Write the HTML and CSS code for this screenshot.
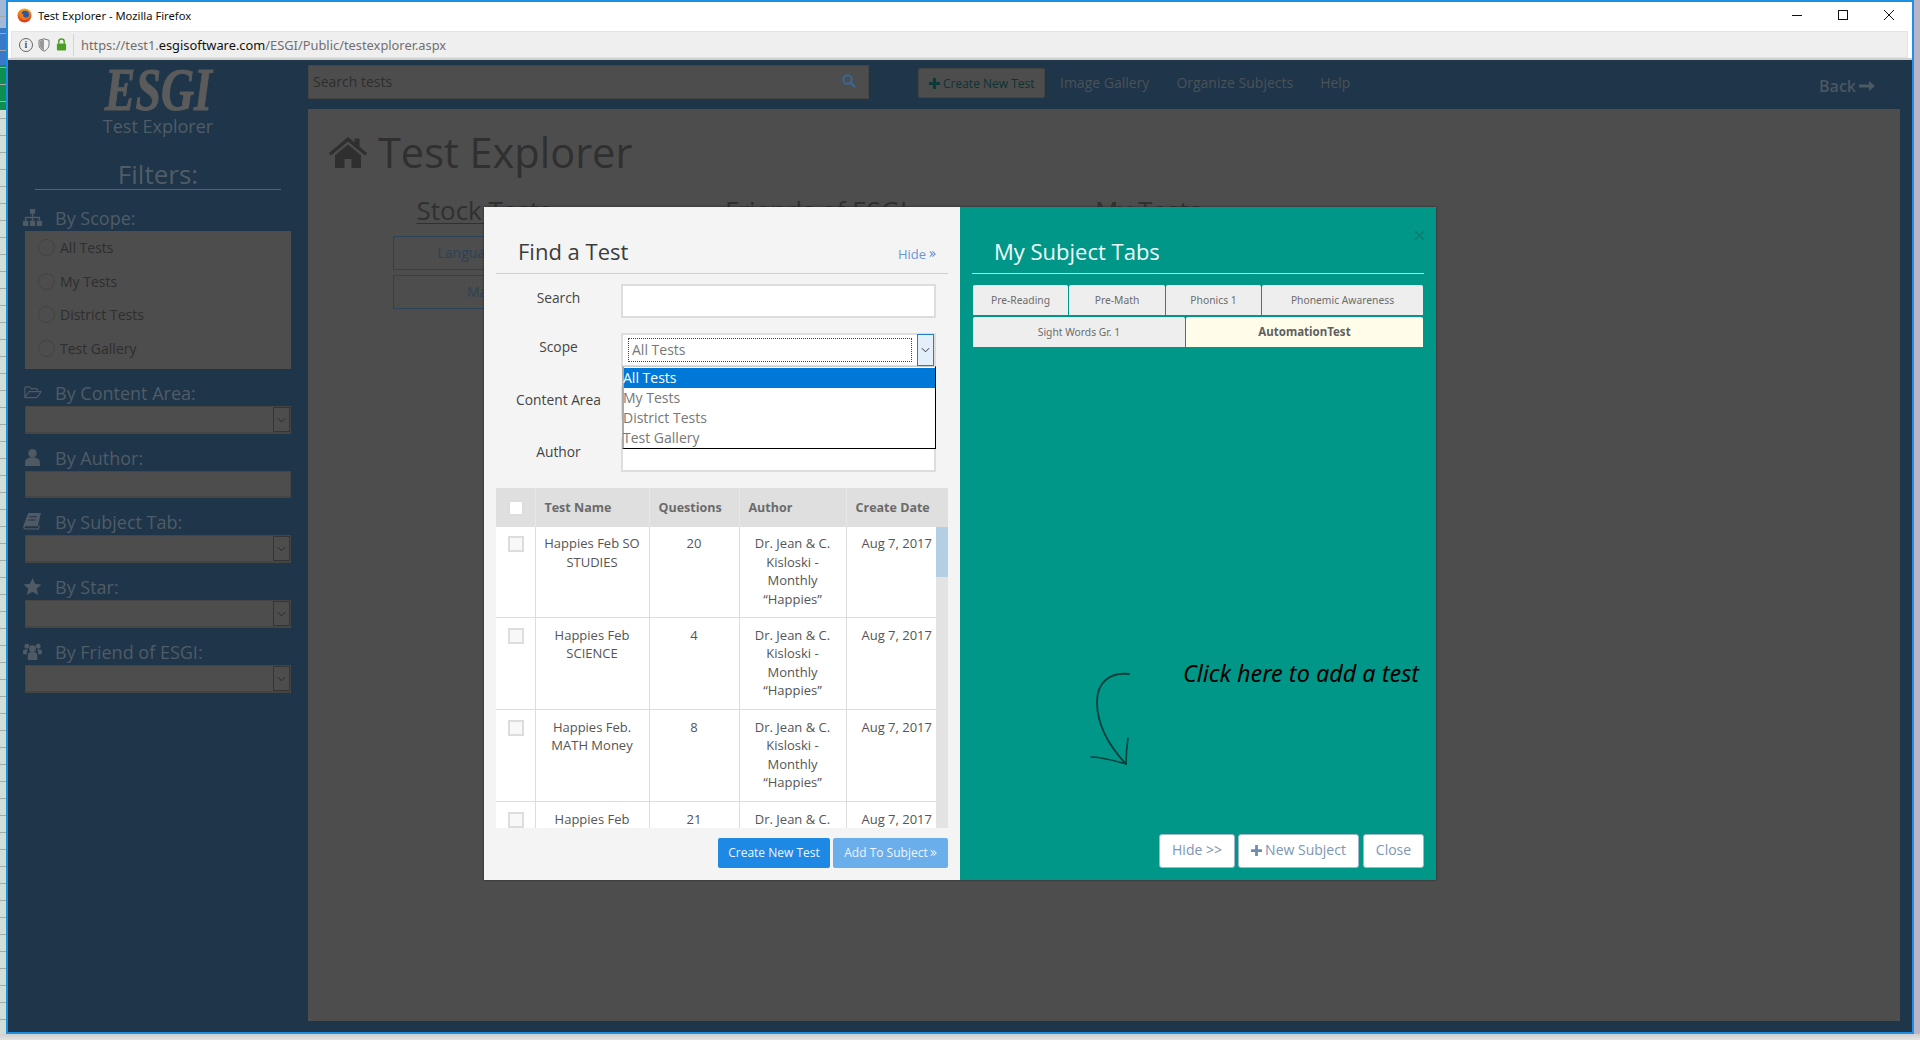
FILE: index.html
```html
<!DOCTYPE html>
<html lang="en">
<head>
<meta charset="utf-8">
<title>Test Explorer - Mozilla Firefox</title>
<link rel="stylesheet" href="styles.css">
</head>
<body>
<div class="desktop">
  <div class="strip-left"></div>
  <div class="window">
    <div class="titlebar">
      <svg class="ff" viewBox="0 0 16 16" width="15" height="15"><defs><linearGradient id="ffg" x1="0" y1="0" x2="0" y2="1"><stop offset="0" stop-color="#f7a31c"/><stop offset="1" stop-color="#d6371f"/></linearGradient></defs><circle cx="8" cy="8" r="7.5" fill="url(#ffg)"/><circle cx="8.6" cy="7.2" r="4.2" fill="#2b5aa0"/><path d="M3 3.5C2 7 3.5 12.5 8.5 12.5c2.8 0 4.6-2 4.8-4.4-1 1.7-2.6 2.5-4.3 2.2C6.800 10 5.800 8 7 6.500 5.500 6.500 4.500 5.500 5 4 4 4 3.500 4 3 3.500z" fill="#ef7a1f"/></svg>
      <span class="title-text">Test Explorer - Mozilla Firefox</span>
      <div class="win-controls">
        <svg viewBox="0 0 12 12" width="12" height="12"><path d="M1 6.500h10" stroke="#111" stroke-width="1" fill="none"/></svg>
        <svg viewBox="0 0 12 12" width="12" height="12"><rect x="1.500" y="1.500" width="9" height="9" stroke="#111" fill="none"/></svg>
        <svg viewBox="0 0 12 12" width="12" height="12"><path d="M1 1l10 10M11 1L1 11" stroke="#111" fill="none"/></svg>
      </div>
    </div>
    <div class="addressbar">
      <div class="address-box">
        <span class="info-icon">i</span>
        <svg class="shield" viewBox="0 0 12 14" width="12" height="14"><path d="M6 .8l5 1.500v4.500c0 3-2.300 5.200-5 6.400C3.300 12 1 9.800 1 6.800V2.300z" fill="#f5f5f5" stroke="#777"/><path d="M6 1.500v11c-2.300-1-4.300-3-4.300-5.700V2.800z" fill="#999"/></svg>
        <svg class="lock" viewBox="0 0 12 14" width="11" height="13"><path d="M3 6V4a3 3 0 016 0v2" stroke="#4c9f25" stroke-width="1.600" fill="none"/><rect x="1" y="6" width="10" height="7.500" rx="1" fill="#4c9f25"/></svg>
        <span class="url"><span class="url-dim">https://test1.</span><span class="url-host">esgisoftware.com</span><span class="url-dim">/ESGI/Public/testexplorer.aspx</span></span>
      </div>
    </div>
    <div class="page">
      <aside class="sidebar">
        <div class="logo"><span class="logo-word">ESGI</span></div>
        <div class="logo-sub">Test Explorer</div>
        <div class="filters-title">Filters:</div>
        <div class="heading">
          <svg class="heading-icon" viewBox="0 0 18 16"><path d="M6.500 0h5v4.500h-5zM0 11h5v5H0zM6.500 11h5v5h-5zM13 11h5v5h-5z" fill="#4f5a64"/><path d="M9 4v7M2.500 11V8h13v3" stroke="#4f5a64" stroke-width="1.400" fill="none"/></svg>
          <span>By Scope:</span>
        </div>
        <div class="scope-panel">
          <label class="radio-row"><span class="radio"></span>All Tests</label>
          <label class="radio-row"><span class="radio"></span>My Tests</label>
          <label class="radio-row"><span class="radio"></span>District Tests</label>
          <label class="radio-row"><span class="radio"></span>Test Gallery</label>
        </div>
        <div class="heading spaced">
          <svg class="heading-icon" viewBox="0 0 20 14"><path d="M2 12.500V2.200c0-.6.400-1 1-1h4l1.500 1.800H14c.6 0 1 .4 1 1v2M2 12.500h12.500L19 6.200H6.200z" fill="none" stroke="#4f5a64" stroke-width="1.300" stroke-linejoin="round"/></svg>
          <span>By Content Area:</span>
        </div>
        <div class="side-select"><span class="side-arrow"><svg viewBox="0 0 10 6" width="9" height="6"><path d="M1 1l4 4 4-4" stroke="#222" fill="none"/></svg></span></div>
        <div class="heading spaced">
          <svg class="heading-icon" viewBox="0 0 18 16"><circle cx="9" cy="4" r="4" fill="#4f5a64"/><path d="M2 16v-3.500C2 9.500 4.500 8 9 8s7 1.500 7 4.500V16z" fill="#4f5a64"/></svg>
          <span>By Author:</span>
        </div>
        <div class="side-input"></div>
        <div class="heading spaced">
          <svg class="heading-icon" viewBox="0 0 18 16"><path d="M5 0h12l-3 12.500H2.500c-1.300 0-1.300 2 0 2H14l1-3 1 .5-1 3.500H2C0 15.500 0 13 .5 11.500z" fill="#4f5a64"/><path d="M6 3.500h7M5 6.500h7" stroke="#1f3549" fill="none"/></svg>
          <span>By Subject Tab:</span>
        </div>
        <div class="side-select"><span class="side-arrow"><svg viewBox="0 0 10 6" width="9" height="6"><path d="M1 1l4 4 4-4" stroke="#222" fill="none"/></svg></span></div>
        <div class="heading spaced">
          <svg class="heading-icon" viewBox="0 0 18 16"><path d="M9 0l2.500 5.500 6 .6-4.500 4 1.300 5.900L9 13l-5.300 3L5 10.100.5 6.100l6-.6z" fill="#4f5a64"/></svg>
          <span>By Star:</span>
        </div>
        <div class="side-select"><span class="side-arrow"><svg viewBox="0 0 10 6" width="9" height="6"><path d="M1 1l4 4 4-4" stroke="#222" fill="none"/></svg></span></div>
        <div class="heading spaced">
          <svg class="heading-icon" viewBox="0 0 20 18"><circle cx="4" cy="3.500" r="2.600" fill="#4f5a64"/><circle cx="16" cy="3.500" r="2.600" fill="#4f5a64"/><circle cx="10" cy="6" r="3.600" fill="#4f5a64"/><path d="M0 12V9c0-2 1.500-2.500 4-2.500l1 1.500c-1 1-1 2.500-1 4zM20 12V9c0-2-1.500-2.500-4-2.500L15 8c1 1 1 2.500 1 4zM5 18v-5c0-2.500 1.500-3.500 5-3.500s5 1 5 3.500v5z" fill="#4f5a64"/></svg>
          <span>By Friend of ESGI:</span>
        </div>
        <div class="side-select"><span class="side-arrow"><svg viewBox="0 0 10 6" width="9" height="6"><path d="M1 1l4 4 4-4" stroke="#222" fill="none"/></svg></span></div>
      </aside>
      <main class="main">
        <div class="topbar">
          <div class="top-search">
            <span class="top-search-text">Search tests</span>
            <svg viewBox="0 0 14 14" width="14" height="14"><circle cx="5.500" cy="5.500" r="4.200" stroke="#33689a" stroke-width="2" fill="none"/><path d="M8.800 8.800L13 13" stroke="#33689a" stroke-width="2.400"/></svg>
          </div>
          <div class="top-create"><svg viewBox="0 0 12 12" width="11" height="11"><path d="M6 0v12M0 6h12" stroke="#0c3a38" stroke-width="3.400"/></svg><span>Create New Test</span></div>
          <nav class="top-nav"><span>Image Gallery</span><span>Organize Subjects</span><span>Help</span></nav>
          <div class="back">Back <svg viewBox="0 0 16 10" width="16" height="10"><path d="M0 3.500h10V0l6 5-6 5V6.500H0z" fill="#4d5963"/></svg></div>
        </div>
        <div class="content">
          <h1 class="page-title"><svg viewBox="0 0 38 31" width="38" height="31"><path d="M19 0l6.500 5.500V1.500h5v8.200L38 16l-2 2.500L19 4.500 2 18.500 0 16z" fill="#2f2f2f"/><path d="M19 7.500l13 10.800V31h-9.500v-9h-7v9H6V18.300z" fill="#2f2f2f"/></svg>Test Explorer</h1>
          <div class="columns">
            <section>
              <h2>Stock Tests</h2>
              <div class="stock-btn">Language Arts</div>
              <div class="stock-btn">Math</div>
            </section>
            <section><h2>Friends of ESGI</h2></section>
            <section><h2>My Tests</h2></section>
          </div>
        </div>
      </main>
    </div>
  </div>
  <div class="modal">
    <div class="panel-left">
      <div class="panel-head">
        <span class="panel-title">Find a Test</span>
        <span class="hide-link">Hide<svg class="chev" viewBox="0 0 8 8" width="7" height="8"><path d="M1 1l3 3-3 3M4 1l3 3-3 3" stroke="currentColor" stroke-width="1.300" fill="none"/></svg></span>
      </div>
      <div class="form-row first"><span class="form-label">Search</span><div class="field"></div></div>
      <div class="form-row scope"><span class="form-label">Scope</span>
        <div class="field select-field">
          <div class="select-focus">All Tests</div>
          <div class="select-btn"><svg viewBox="0 0 10 6" width="9" height="6"><path d="M1 1l4 4 4-4" stroke="#222" fill="none"/></svg></div>
          <ul class="dropdown">
            <li class="selected">All Tests</li>
            <li>My Tests</li>
            <li>District Tests</li>
            <li>Test Gallery</li>
          </ul>
        </div>
      </div>
      <div class="form-row content-row"><span class="form-label">Content Area</span><div class="field"></div></div>
      <div class="form-row author-row"><span class="form-label">Author</span><div class="field"></div></div>
      <div class="table-box">
        <table class="grid head">
          <colgroup><col class="c1"><col class="c2"><col class="c3"><col class="c4"><col class="c5h"></colgroup>
          <tr><th class="check"><span class="box white"></span></th><th>Test Name</th><th>Questions</th><th>Author</th><th>Create Date</th></tr>
        </table>
        <div class="table-scroll">
          <table class="grid body">
            <colgroup><col class="c1"><col class="c2"><col class="c3"><col class="c4"><col class="c5"></colgroup>
            <tr class="row-first"><td class="check"><span class="box"></span></td><td>Happies Feb SO STUDIES</td><td>20</td><td>Dr. Jean &amp; C. Kisloski - Monthly “Happies”</td><td class="date">Aug 7, 2017</td></tr>
            <tr><td class="check"><span class="box"></span></td><td>Happies Feb SCIENCE</td><td>4</td><td>Dr. Jean &amp; C. Kisloski - Monthly “Happies”</td><td class="date">Aug 7, 2017</td></tr>
            <tr><td class="check"><span class="box"></span></td><td>Happies Feb. MATH Money</td><td>8</td><td>Dr. Jean &amp; C. Kisloski - Monthly “Happies”</td><td class="date">Aug 7, 2017</td></tr>
            <tr><td class="check"><span class="box"></span></td><td>Happies Feb</td><td>21</td><td>Dr. Jean &amp; C. Kisloski - Monthly “Happies”</td><td class="date">Aug 7, 2017</td></tr>
          </table>
          <div class="scrollbar"><div class="thumb"></div></div>
        </div>
      </div>
      <div class="left-actions">
        <span class="action primary">Create New Test</span>
        <span class="action light">Add To Subject<svg class="chev" viewBox="0 0 8 8" width="7" height="8"><path d="M1 1l3 3-3 3M4 1l3 3-3 3" stroke="currentColor" stroke-width="1.200" fill="none"/></svg></span>
      </div>
    </div>
    <div class="panel-right">
      <svg class="close-x" viewBox="0 0 12 12" width="11" height="11"><path d="M1 1l10 10M11 1L1 11" stroke="#0b7d73" stroke-width="1.500" fill="none"/></svg>
      <div class="panel-head light-rule">
        <span class="panel-title white">My Subject Tabs</span>
      </div>
      <div class="tabs row-a">
        <span class="tab">Pre-Reading</span><span class="tab">Pre-Math</span><span class="tab">Phonics 1</span><span class="tab">Phonemic Awareness</span>
      </div>
      <div class="tabs row-b">
        <span class="tab">Sight Words Gr. 1</span><span class="tab active">AutomationTest</span>
      </div>
      <div class="hint">
        <svg class="hint-arrow" viewBox="0 0 46 100" width="46" height="100"><path d="M41 4C22 2 9 12 9 32c0 24 14 46 29 62" stroke="#063f3c" stroke-width="1.800" fill="none" stroke-linecap="round"/><path d="M3 87c12 0 24 4 35 7 0-10 1-19 2-26" stroke="#063f3c" stroke-width="1.600" fill="none" stroke-linecap="round"/></svg>
        <span class="hint-text">Click here to add a test</span>
      </div>
      <div class="right-actions">
        <span class="ghost hide-btn">Hide &gt;&gt;</span>
        <span class="ghost new-btn"><svg viewBox="0 0 12 12" width="11" height="11"><path d="M6 0v12M0 6h12" stroke="#6f8db0" stroke-width="3"/></svg>New Subject</span>
        <span class="ghost close-btn">Close</span>
      </div>
    </div>
  </div>
</div>
</body>
</html>
```
FILE: styles.css
```css
* { box-sizing: border-box; }
html, body { margin: 0; padding: 0; }
body { width: 1920px; height: 1040px; overflow: hidden; font-family: "Open Sans", "Noto Sans", sans-serif; }

.desktop {
  position: relative;
  width: 1920px;
  height: 1040px;
  display: flex;
  background: linear-gradient(#b9b4c8 0, #b9b4c8 1034px, #cfcfcf 1034px, #e4e4e4 1040px);
}
.strip-left {
  width: 6px;
  height: 1034px;
  background:
    repeating-linear-gradient(transparent 0 16px, #a5aaa8 16px 17px),
    linear-gradient(#a3b7d6 0 28px, #3a78c8 28px 65px, #0c8f50 65px 110px, #d2dfd9 110px);
}
.window {
  width: 1908px;
  height: 1034px;
  border: 2px solid #1c8fe3;
  display: flex;
  flex-direction: column;
  background: #fff;
}

/* Browser chrome */
.titlebar { height: 28px; display: flex; align-items: center; padding: 0 17px 2px 9px; }
.ff { margin-right: 6px; }
.title-text { font-family: "Noto Sans", sans-serif; font-size: 11.200px; color: #111; }
.win-controls { margin-left: auto; display: flex; gap: 34px; }
.addressbar { height: 30px; padding: 1px 4px 2px 3px; border-bottom: 2px solid #d0d0d0; }
.address-box { height: 27px; background: #efefef; border: 1px solid #e4e4e4; display: flex; align-items: center; padding-left: 7px; }
.info-icon { width: 14px; height: 14px; border: 1.500px solid #666; border-radius: 50%; font: bold 10px/11px "Liberation Serif", serif; color: #555; text-align: center; margin-right: 5px; }
.shield { margin-right: 6px; }
.lock { margin-right: 6px; }
.url { font-family: "Noto Sans", sans-serif; font-size: 12.850px; padding-left: 7px; border-left: 1px solid #d4d4d4; line-height: 22px; }
.url-dim { color: #6f6f6f; }
.url-host { color: #111; }

/* Page */
.page { flex: 1; display: flex; background: #1f3549; min-height: 0; }
.sidebar { width: 300px; padding: 0 17px; color: #505c67; }
.logo { text-align: center; height: 54px; padding-top: 4px; }
.logo-word { display: inline-block; font: italic bold 62px/50px "Liberation Serif", serif; color: #5b5b5b; -webkit-text-stroke: 1px #5b5b5b; transform: scaleX(.74); }
.logo-sub { font-size: 18px; line-height: 24px; text-align: center; }
.filters-title { font-size: 26px; line-height: 34px; text-align: center; margin: 19px 10px 0; border-bottom: 1px solid #56626c; height: 33px; }
.heading { display: flex; align-items: center; height: 26px; font-size: 18px; line-height: 24px; padding-bottom: 1px; margin-top: 15px; margin-left: -2px; }
.heading.spaced { margin-top: 11px; }
.heading-icon { width: 19px; height: 17px; margin-right: 13px; flex: none; }
.scope-panel { height: 138px; background: #4d4d4d; display: grid; grid-template-rows: repeat(4, 1fr); padding: 0 0 4px 13px; }
.radio-row { display: flex; align-items: center; font-size: 14px; color: #2e2e2e; }
.radio { width: 17px; height: 17px; border: 1px solid #424242; border-radius: 50%; margin-right: 5px; }
.side-select, .side-input { height: 28px; background: #4d4d4d; border: 1px solid #454545; border-width: 1px 1px 2px 1px; display: flex; justify-content: flex-end; }
.side-input { height: 27px; }
.side-arrow { width: 17px; border: 1px solid #353535; display: flex; align-items: center; justify-content: center; }

.main { flex: 1; display: flex; flex-direction: column; padding-right: 12px; padding-bottom: 11px; min-width: 0; }
.topbar { height: 49px; display: flex; align-items: flex-start; padding-top: 5px; color: #4f5a64; }
.top-search { width: 561px; height: 34px; background: #4d4d4d; border: 1px solid #454545; display: flex; align-items: center; justify-content: space-between; padding: 0 12px 2px 4px; font-size: 14px; color: #2e2e2e; }
.top-create { margin: 3px 0 0 49px; width: 127px; height: 30px; background: #4d4d4d; border: 1px solid #444; border-radius: 2px; display: flex; align-items: center; gap: 3px; padding-left: 10px; font-size: 12px; color: #0b3232; white-space: nowrap; }
.top-nav { display: flex; gap: 27px; margin: 5px 0 0 15px; font-size: 14px; line-height: 26px; color: #4b5258; }
.back { margin: 9px 25px 0 auto; font-size: 16px; line-height: 24px; font-weight: 600; display: flex; align-items: center; gap: 3px; color: #4b5761; }
.content { flex: 1; background: #4d4d4d; padding: 13px 0 0 21px; color: #303030; }
.page-title { display: flex; align-items: center; gap: 11px; height: 60px; margin: 0; font-size: 41.500px; font-weight: 400; }
.columns { display: grid; grid-template-columns: repeat(3, 182px); column-gap: 150px; margin: 9px 0 0 64px; }
.columns h2 { margin: 0; font-size: 26px; line-height: 38px; font-weight: 400; text-align: center; text-decoration: underline; text-underline-offset: 3px; text-decoration-thickness: 1px; white-space: nowrap; }
.stock-btn { height: 34px; margin-top: 5px; border: 1px solid #2b4359; text-align: center; font-size: 14px; line-height: 32px; color: #2b4156; }
h2 + .stock-btn { margin-top: 7px; }

/* Modal */
.modal { position: absolute; left: 484px; top: 207px; width: 952px; height: 673px; display: flex; box-shadow: 0 0 2px #222; }
.panel-left, .panel-right { width: 476px; padding: 0 12px; display: flex; flex-direction: column; position: relative; }
.panel-left { background: #f4f4f4; }
.panel-right { background: #009688; }
.panel-head { height: 67px; flex: none; border-bottom: 1px solid #cfcfcf; display: flex; align-items: flex-end; justify-content: space-between; padding: 0 12px 6px 22px; }
.panel-title { font-size: 22px; line-height: 32px; color: #3c3c3c; }
.panel-title.white { color: #f2fbfa; }
.light-rule { border-bottom-color: #b6e0db; padding-left: 22px; }
.hide-link { font-size: 13px; line-height: 20px; color: #6c95d6; padding-bottom: 3px; display: inline-flex; align-items: center; gap: 3px; }
.chev { flex: none; }

.form-row { display: grid; grid-template-columns: 125px 315px; height: 34px; }
.form-row.first { margin-top: 10px; }
.form-row.scope { margin-top: 15px; }
.form-row.content-row { margin-top: 19px; }
.form-row.author-row { margin-top: 18px; }
.form-label { text-align: center; font-size: 13.800px; line-height: 28px; color: #444; }
.field { height: 34px; background: #fff; border: 1px solid #ddd; box-shadow: inset 0 0 0 1px #ddd; position: relative; }
.select-field { display: flex; align-items: center; padding: 1px 1px 1px 6px; justify-content: space-between; }
.select-focus { width: 284px; height: 24px; border: 1px dotted #444; font-size: 14px; line-height: 22px; padding-left: 3px; color: #777; }
.select-btn { width: 17px; height: 32px; border: 1px solid #1f7fd3; background: #e3f0fb; display: flex; align-items: center; justify-content: center; }
.dropdown { position: absolute; left: 0; top: 32px; width: 314px; height: 83px; margin: 0; padding: 1px 0 0; list-style: none; background: #fff; border: 1px solid #000; border-left: 2px solid #aaa; border-top: 1px solid #ccc; font-size: 14px; color: #777; z-index: 2; }
.dropdown li { height: 20px; line-height: 19px; margin-left: -1px; }
.dropdown .selected { background: #0078d7; color: #fff; margin-left: 0; text-indent: -1px; }

.table-box { width: 452px; height: 340px; margin-top: 16px; overflow: hidden; flex: none; }
.grid { border-collapse: collapse; table-layout: fixed; }
.grid.head { width: 452px; background: #dfdfdf; }
.grid.body { width: 440px; background: #fff; }
.c1 { width: 39px; } .c2 { width: 114px; } .c3 { width: 90px; } .c4 { width: 107px; } .c5 { width: 90px; } .c5h { width: 102px; }
.grid th { height: 39px; padding: 0 0 0 9px; text-align: left; font-size: 12.500px; font-weight: 700; color: #6b6b6b; border-right: 1px solid #e8e8e8; white-space: nowrap; }
.grid td { height: 92px; padding: 8px 3px 0; vertical-align: top; text-align: center; font-size: 13px; line-height: 18.600px; color: #555; border: 1px solid #ddd; border-width: 0 1px 1px 0; }
.grid .row-first td { height: 90px; padding-top: 7px; }
.grid td:last-child { border-right: 0; }
.grid td.date { text-align: right; padding-right: 4px; padding-left: 0; white-space: nowrap; }
.grid th.check, .grid td.check { padding: 0 0 0 12px; text-align: left; }
.grid td.check { padding-top: 10px; }
.grid .row-first td.check { padding-top: 9px; }
.box { display: block; width: 16px; height: 16px; border: 2px solid #ddd; background: #f8f8f8; }
.box.white { background: #fff; }
.table-scroll { display: flex; align-items: flex-start; height: 301px; overflow: hidden; }
.scrollbar { width: 12px; height: 301px; background: #e3e3e3; flex: none; }
.thumb { height: 50px; background: #b4cfe4; }

.left-actions { display: flex; justify-content: flex-end; gap: 3px; margin-top: 10px; }
.action { height: 30px; border-radius: 2px; color: #eef5fc; font-size: 12px; line-height: 30px; display: inline-flex; align-items: center; justify-content: center; gap: 2px; }
.action.primary { width: 112px; background: #1e88e5; }
.action.light { width: 115px; background: #6aaeec; }

/* Right panel */
.close-x { position: absolute; top: 23px; right: 11px; }
.tabs { display: grid; gap: 1px; height: 30px; margin: 0 1px; flex: none; }
.row-a { grid-template-columns: 95px 96px 95px 1fr; margin-top: 11px; }
.row-b { grid-template-columns: 212px 1fr; margin-top: 2px; }
.tab { background: #eee; border-radius: 2px 2px 0 0; font-family: "Noto Sans", sans-serif; font-size: 10.300px; line-height: 30px; text-align: center; color: #6c6c6c; }
.tab.active { background: #fffde9; font-size: 11.500px; font-weight: 700; color: #5f5f5f; }
.hint { display: flex; align-items: flex-start; margin: 323px 0 0 116px; flex: none; }
.hint-text { margin: -13px 0 0 49px; font-family: "Noto Sans", sans-serif; font-style: italic; font-size: 23.400px; line-height: 32px; color: #000; white-space: nowrap; }
.hint-arrow { flex: none; }
.right-actions { margin-top: auto; padding: 0 0 12px 0; display: flex; justify-content: flex-end; }
.ghost { height: 34px; background: #fff; border: 1px solid #9db7cc; border-radius: 3px; font-size: 14px; line-height: 30px; padding-bottom: 2px; text-align: center; color: #7d96b4; display: inline-flex; align-items: center; justify-content: center; gap: 3px; }
.hide-btn { width: 76px; margin-right: 3px; }
.new-btn { width: 121px; margin-right: 4px; }
.close-btn { width: 61px; }
```
